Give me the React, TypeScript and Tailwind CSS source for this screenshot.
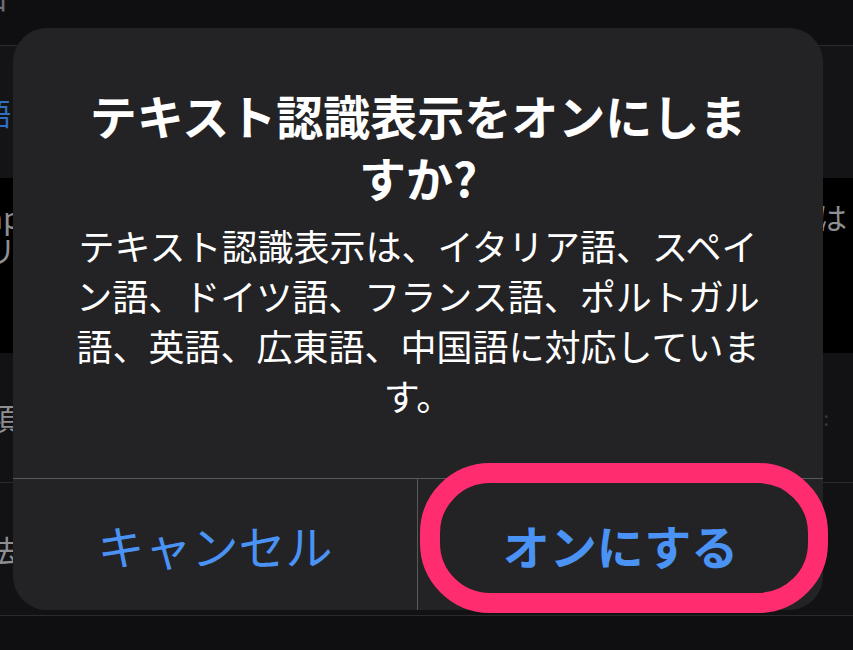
export default function App() {
  return (
    <div className="relative h-[650px] w-[853px] overflow-hidden bg-[#0f0f11] font-['Noto_Sans_CJK_JP',sans-serif]">
      {/* settings list behind the alert */}
      <div className="flex h-[46px] items-start border-b border-[#2a2a2d]">
        <div className="-ml-[22px] -mt-[20px] text-[30px] leading-[33px] text-[#6e6e73]">口</div>
      </div>
      <div className="flex h-[132px] items-center bg-[#141416]">
        <div className="-ml-[19px] text-[30px] leading-[33px] text-[#2f6fc4]">語</div>
      </div>
      <div className="flex h-[175px] justify-between bg-black pt-[22px]">
        <div className="-ml-[14px] text-[30px] leading-[33px] text-[#8e8e93]">
          <div>ap</div>
          <div>リ</div>
        </div>
        <div className="pr-[6px] text-[30px] leading-[33px] text-[#8e8e93]">
          <div>は</div>
        </div>
      </div>
      <div className="flex h-[130px] items-center justify-between border-b border-[#2a2a2d] bg-[#121214]">
        <div className="-ml-[12px] text-[30px] leading-[33px] text-[#8e8e93]">項</div>
        <div className="mr-[24px] text-[20px] text-[#3a3a3c]">:</div>
      </div>
      <div className="flex h-[133px] items-center border-b border-[#2a2a2d] bg-[#121214]">
        <div className="-ml-[12px] text-[30px] leading-[33px] text-[#8e8e93]">法</div>
      </div>

      {/* alert */}
      <div className="absolute left-[13px] top-[28px] flex h-[582px] w-[810px] flex-col overflow-hidden rounded-[34px] bg-[#232325]">
        <div className="flex h-[450px] flex-col items-center px-[55px] pt-[56px] text-center text-white">
          <h2 className="w-[700px] text-[47px] font-bold leading-[62px]">テキスト認識表示をオンにしますか?</h2>
          <p className="mt-[12px] w-[700px] text-[36px] leading-[50px]">
            テキスト認識表示は、イタリア語、スペイン語、ドイツ語、フランス語、ポルトガル語、英語、広東語、中国語に対応しています。
          </p>
        </div>
        <div className="grid flex-1 grid-cols-2 border-t border-[#59595d]">
          <button className="flex items-center justify-center border-r border-[#59595d] text-[47px] leading-none text-[#4a93f5]">
            キャンセル
          </button>
          <button className="flex items-center justify-center text-[47px] font-bold leading-none text-[#4a93f5]">
            オンにする
          </button>
        </div>
      </div>

      {/* highlight ring */}
      <div className="absolute left-[420px] top-[463px] h-[150px] w-[408px] rounded-[70px] border-[20px] border-[#ff2d6f]" />
    </div>
  )
}
